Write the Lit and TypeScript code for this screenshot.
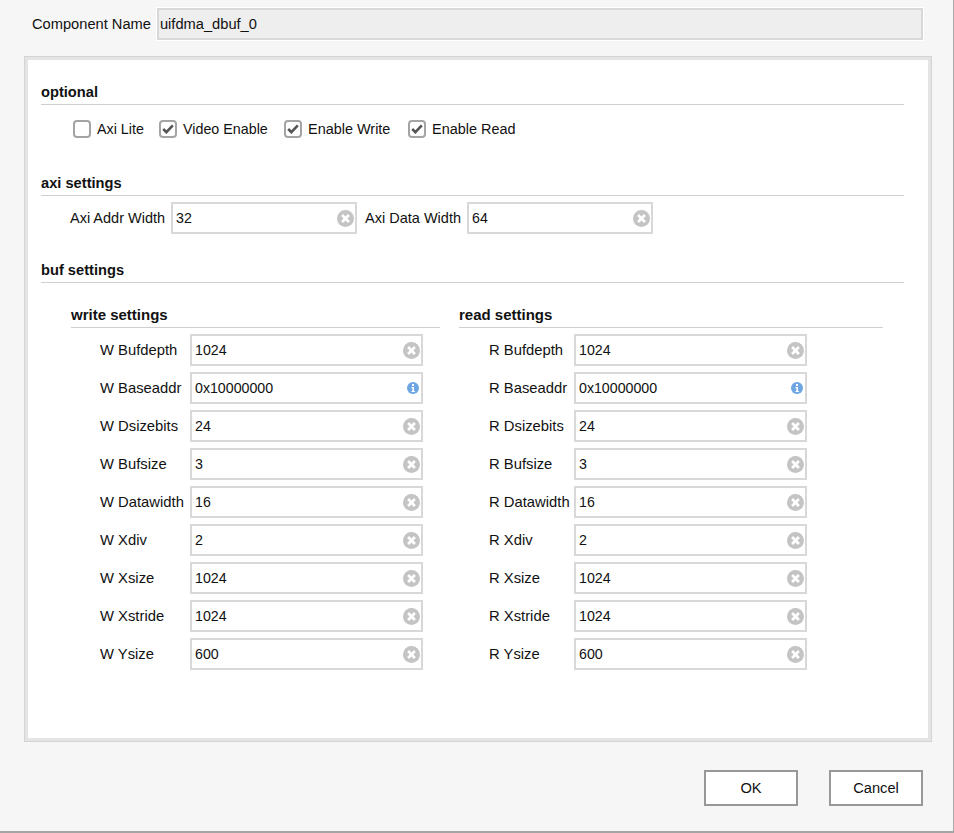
import { LitElement, html, css } from "lit";
import { customElement } from "lit/decorators.js";

const clearIcon = html`<svg class="ico clr" width="17" height="17" viewBox="0 0 16 16"><circle cx="8" cy="8" r="8" fill="#c4c4c4"/><path d="M4.8 4.8l6.4 6.4M11.2 4.8l-6.4 6.4" stroke="#fff" stroke-width="2.6" fill="none"/></svg>`;
const infoIcon = html`<svg class="ico inf" width="12" height="12" viewBox="0 0 12 12"><circle cx="6" cy="6" r="6" fill="#6ea6e4"/><rect x="5" y="2" width="2" height="2" fill="#fff"/><path d="M4.4 5h2.6v4h1v1H4.4V9h1V6h-1z" fill="#fff"/></svg>`;
const check = html`<svg width="12" height="10" viewBox="0 0 12 10"><path d="M1.2 5l3.2 3.2L10.8 1.4" stroke="#555" stroke-width="2.6" fill="none"/></svg>`;

const rows: [string, string][] = [
  ["Bufdepth", "1024"], ["Baseaddr", "0x10000000"], ["Dsizebits", "24"],
  ["Bufsize", "3"], ["Datawidth", "16"], ["Xdiv", "2"],
  ["Xsize", "1024"], ["Xstride", "1024"], ["Ysize", "600"],
];
const checks: [string, boolean][] = [
  ["Axi Lite", false], ["Video Enable", true], ["Enable Write", true], ["Enable Read", true],
];

@customElement("app-root")
export class AppRoot extends LitElement {
  static styles = css`
    :host { display: block; width: 954px; height: 833px; font-family: "Liberation Sans", Arial, sans-serif; font-size: 14.67px; color: #111; }
    * { box-sizing: border-box; }
    .dialog { width: 954px; height: 833px; background: #f6f6f6; border-right: 1px solid #aaa; border-bottom: 2px solid #a4a4a4; padding: 8px 30px 0 24px; display: flex; flex-direction: column; }
    .name { display: flex; align-items: center; height: 32px; padding-left: 8px; gap: 6px; }
    .name label { white-space: nowrap; }
    .name .val { flex: 1; height: 32px; background: #eee; border: 2px solid #d8d8d8; outline: 1px solid #fff; display: flex; align-items: center; padding-left: 1px; }
    .panel { margin-top: 16px; width: 908px; height: 686px; background: #fff; border: 1px solid #d4d4d4; box-shadow: inset 0 0 0 3px #e4e4e4; padding: 28px 27px 0 16px; }
    .head { font-weight: bold; height: 20px; line-height: 14px; border-bottom: 1px solid #d0d0d0; }
    .checks { display: flex; height: 18px; margin: 15px 0 0 32px; gap: 16px; font-size: 14.3px; }
    .chk { display: flex; align-items: center; gap: 6px; white-space: nowrap; }
    .chk:nth-child(1) { width: 70px; }
    .chk:nth-child(2) { width: 109px; }
    .chk:nth-child(3) { width: 108px; }
    .chk:nth-child(3), .chk:nth-child(4) { font-size: 14.45px; }
    .box { flex: none; width: 18px; height: 18px; border: 2px solid #a4a4a4; border-radius: 4px; background: #fff; display: flex; align-items: center; justify-content: center; }
    .h2 { margin-top: 38px; }
    .axi { display: flex; align-items: center; margin: 6px 0 0 29px; height: 32px; }
    .axi label { margin-right: 6px; white-space: nowrap; font-size: 14.5px; }
    .axi .input { width: 186px; margin-right: 8px; }
    .h3 { margin-top: 30px; height: 19px; line-height: 12px; }
    .input { height: 32px; border: 2px solid #d8d8d8; background: #fff; display: flex; align-items: center; justify-content: space-between; padding: 0 1px 0 3px; font-size: 14.2px; }
    .input .ico { flex: none; }
    .input .inf { margin-right: 1px; }
    .cols { display: flex; margin: 25px 0 0 30px; }
    .col { display: flex; flex-direction: column; }
    .col.w { width: 369px; margin-right: 19px; }
    .col.r { width: 424px; }
    .col .ttl { font-weight: bold; font-size: 15px; height: 20px; line-height: 14px; border-bottom: 1px solid #d0d0d0; margin-bottom: 6px; }
    .row { display: flex; align-items: center; height: 32px; margin-bottom: 6px; padding-left: 29px; }
    .col.r .row { padding-left: 30px; }
    .row label { width: 90px; flex: none; white-space: nowrap; font-size: 14.8px; }
    .col.r .row label { width: 85px; }
    .row .input { width: 233px; }
    .foot { display: flex; justify-content: flex-end; margin-top: 28px; gap: 31px; }
    .btn { width: 94px; height: 36px; background: #fff; border: 2px solid #989898; font: inherit; color: #111; padding: 0; }
  `;

  private section(p: string, w: boolean) {
    return html`<div class="col ${w ? "w" : "r"}">
      <div class="ttl">${w ? "write settings" : "read settings"}</div>
      ${rows.map(([n, v]) => html`<div class="row"><label>${p} ${n}</label>
        <div class="input"><span>${v}</span>${n === "Baseaddr" ? infoIcon : clearIcon}</div></div>`)}
    </div>`;
  }

  render() {
    return html`<div class="dialog">
      <div class="name"><label>Component Name</label><div class="val">uifdma_dbuf_0</div></div>
      <div class="panel">
        <div class="head">optional</div>
        <div class="checks">
          ${checks.map(([t, c]) => html`<div class="chk"><span class="box">${c ? check : ""}</span><span>${t}</span></div>`)}
        </div>
        <div class="head h2">axi settings</div>
        <div class="axi">
          <label>Axi Addr Width</label><div class="input"><span>32</span>${clearIcon}</div>
          <label>Axi Data Width</label><div class="input"><span>64</span>${clearIcon}</div>
        </div>
        <div class="head h3">buf settings</div>
        <div class="cols">${this.section("W", true)}${this.section("R", false)}</div>
      </div>
      <div class="foot"><button class="btn">OK</button><button class="btn">Cancel</button></div>
    </div>`;
  }
}
